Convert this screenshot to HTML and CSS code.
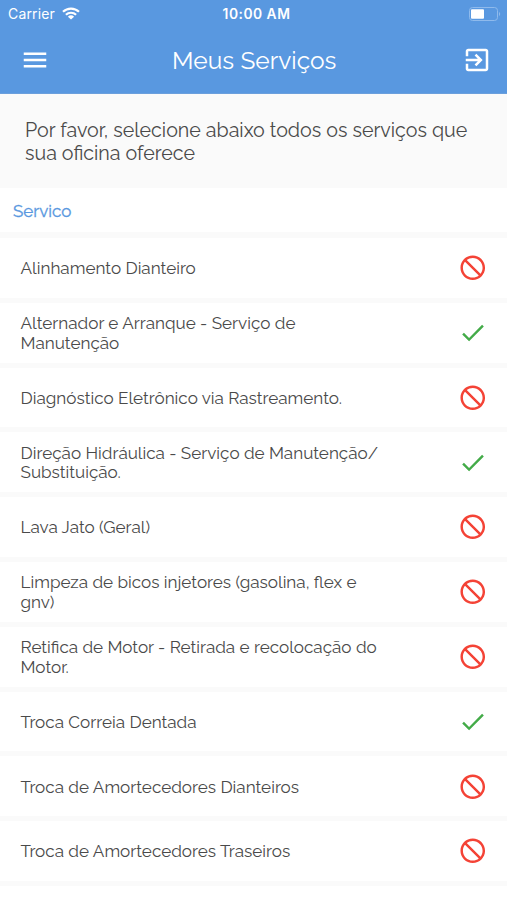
FILE: index.html
```html
<!DOCTYPE html>
<html lang="pt-BR">

<head>
    <meta charset="UTF-8">
    <meta name="viewport" content="width=device-width, initial-scale=1.0">
    <title>Meus Serviços</title>
    <link rel="stylesheet" href="styles.css">
</head>

<body>

    <!-- Shared icons -->
    <svg class="icon-defs" width="0" height="0">
        <symbol id="block" viewBox="0 0 24 24">
            <path d="M12 2C6.48 2 2 6.48 2 12s4.48 10 10 10 10-4.48 10-10S17.52 2 12 2zM4 12c0-4.42 3.58-8 8-8 1.85 0 3.55.63 4.9 1.69L5.69 16.9C4.63 15.55 4 13.85 4 12zm8 8c-1.85 0-3.55-.63-4.9-1.69L18.31 7.1C19.37 8.45 20 10.15 20 12c0 4.42-3.58 8-8 8z" transform="matrix(-1 0 0 1 24 0)" />
        </symbol>
        <symbol id="check" viewBox="0 0 24 24">
            <path d="M9 16.17L4.83 12l-1.42 1.41L9 19 21 7l-1.41-1.41z" />
        </symbol>
    </svg>

    <!-- Header -->
    <header class="header">
        <div class="status-bar">
            <div class="carrier">
                <span>Carrier</span>
                <svg class="wifi" viewBox="0 0 18 13">
                    <path d="M1 4.8a11.6 11.6 0 0 1 16 0M3.9 7.8a7.4 7.4 0 0 1 10.2 0" fill="none" stroke="#fff" stroke-width="2.2" />
                    <path d="M9 12.6L5.9 9.7a4.5 4.5 0 0 1 6.2 0z" fill="#fff" />
                </svg>
            </div>
            <span class="clock">10:00 AM</span>
            <svg class="battery" viewBox="0 0 32 14">
                <rect x=".5" y=".5" width="28" height="13" rx="3" fill="none" stroke="#8fbaec" />
                <rect x="2" y="2.2" width="13" height="9.6" rx="1" fill="#fff" />
                <path d="M30 5v4c1.6-.6 1.6-3.4 0-4z" fill="#8fbaec" />
            </svg>
        </div>
        <div class="nav-bar">
            <svg class="nav-icon" viewBox="0 0 24 24">
                <path d="M3 18h18v-2H3v2zm0-5h18v-2H3v2zm0-7v2h18V6H3z" />
            </svg>
            <h1 class="title">Meus Serviços</h1>
            <svg class="nav-icon" viewBox="0 0 24 24">
                <path d="M10.09 15.59L11.5 17l5-5-5-5-1.41 1.41L12.67 11H3v2h9.67l-2.58 2.59zM19 3H5c-1.11 0-2 .9-2 2v4h2V5h14v14H5v-4H3v4c0 1.1.89 2 2 2h14c1.1 0 2-.9 2-2V5c0-1.1-.9-2-2-2z" />
            </svg>
        </div>
    </header>

    <!-- Intro -->
    <p class="intro">Por favor, selecione abaixo todos os serviços que<br>sua oficina oferece</p>

    <!-- Services -->
    <h2 class="list-title">Servico</h2>
    <ul class="service-list">
        <li class="service">
            <span>Alinhamento Dianteiro</span>
            <svg class="icon off"><use href="#block" /></svg>
        </li>
        <li class="service">
            <span>Alternador e Arranque - Serviço de<br>Manutenção</span>
            <svg class="icon on"><use href="#check" /></svg>
        </li>
        <li class="service">
            <span>Diagnóstico Eletrônico via Rastreamento.</span>
            <svg class="icon off"><use href="#block" /></svg>
        </li>
        <li class="service">
            <span>Direção Hidráulica - Serviço de Manutenção/<br>Substituição.</span>
            <svg class="icon on"><use href="#check" /></svg>
        </li>
        <li class="service">
            <span>Lava Jato (Geral)</span>
            <svg class="icon off"><use href="#block" /></svg>
        </li>
        <li class="service">
            <span>Limpeza de bicos injetores (gasolina, flex e<br>gnv)</span>
            <svg class="icon off"><use href="#block" /></svg>
        </li>
        <li class="service">
            <span>Retifica de Motor - Retirada e recolocação do<br>Motor.</span>
            <svg class="icon off"><use href="#block" /></svg>
        </li>
        <li class="service">
            <span>Troca Correia Dentada</span>
            <svg class="icon on"><use href="#check" /></svg>
        </li>
        <li class="service">
            <span>Troca de Amortecedores Dianteiros</span>
            <svg class="icon off"><use href="#block" /></svg>
        </li>
        <li class="service">
            <span>Troca de Amortecedores Traseiros</span>
            <svg class="icon off"><use href="#block" /></svg>
        </li>
    </ul>

</body>

</html>
```
FILE: styles.css
```css
* {
    box-sizing: border-box;
}

body {
    margin: 0;
    height: 900px;
    overflow: hidden;
    font-family: Raleway, Lato, sans-serif;
    color: #4a4a4a;
    background: #fff;
}

.icon-defs {
    display: none;
}

.header {
    height: 94px;
    color: #fff;
    background: #5998e0;
    border-bottom: 1px solid #6b9fdc;
}

.status-bar {
    display: grid;
    grid-template-columns: 1fr auto 1fr;
    align-items: center;
    height: 27px;
    padding: 0 6px 0 8px;
    font-family: Inter, sans-serif;
    font-size: 14px;
}

.carrier {
    display: flex;
    align-items: center;
    gap: 7px;
    letter-spacing: 0.15px;
}

.wifi {
    width: 18px;
    height: 13px;
}

.clock {
    padding-left: 4px;
    font-size: 13.8px;
    font-weight: 600;
    letter-spacing: 0.5px;
}

.battery {
    width: 32px;
    height: 14px;
    justify-self: end;
}

.nav-bar {
    display: flex;
    align-items: center;
    justify-content: space-between;
    height: 66px;
    padding: 0 14.5px 0 20px;
}

.nav-icon {
    width: 30px;
    height: 30px;
    fill: #fff;
}

.title {
    margin: 0;
    padding-right: 4px;
    font-size: 24.5px;
    font-weight: 400;
}

.intro {
    height: 94px;
    margin: 0;
    padding: 25px 25px 0;
    font-size: 19.65px;
    line-height: 23px;
    background: #fafafa;
}

.list-title {
    display: flex;
    align-items: center;
    height: 44px;
    margin: 0;
    padding: 2px 13px 0;
    font-size: 17px;
    font-weight: 400;
    color: #5998e0;
    -webkit-text-stroke: 0.3px #5998e0;
}

.service-list {
    margin: 0;
    padding: 0;
    list-style: none;
    border-top: 1px solid #fafafa;
}

.service {
    display: flex;
    align-items: center;
    justify-content: space-between;
    height: 64.8px;
    padding: 0 20px 0 20.5px;
    border-top: 5px solid #fafafa;
    font-size: 17.1px;
    line-height: 19.5px;
}

.service span {
    padding-top: 2px;
}

.service:last-child {
    height: 69.8px;
    border-bottom: 5px solid #fafafa;
}

.icon {
    width: 29.5px;
    height: 29.5px;
}

.off {
    fill: #f44336;
}

.on {
    fill: #43ab48;
}
```
